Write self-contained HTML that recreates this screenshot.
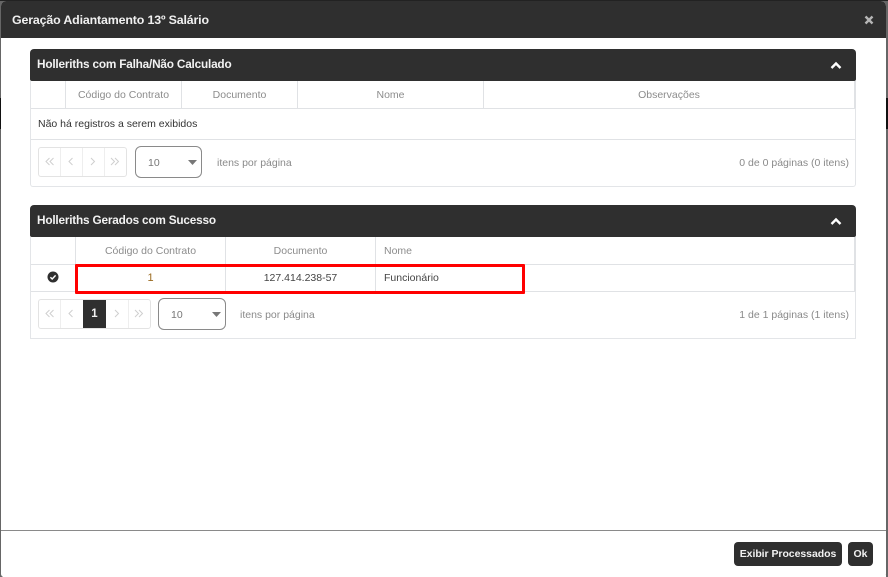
<!DOCTYPE html>
<html lang="pt">
<head>
<meta charset="utf-8">
<title>Geração Adiantamento 13º Salário</title>
<style>
html,body{margin:0;padding:0}
body{width:888px;height:577px;overflow:hidden;background:#666;position:relative;font-family:"Liberation Sans",sans-serif;font-size:10.5px;color:#8a8a8a}
div,span{position:absolute;box-sizing:border-box}
svg{position:absolute;display:block}
.t{white-space:nowrap;line-height:14px}
.c{text-align:center}
.b{font-weight:bold}
.line{background:#e0e2e5}
.hdr{background:#2f2f2f;border-radius:4px 4px 2px 2px;left:30px;width:826px;height:32px}
.hdr .t{left:7px;top:8px;color:#f2f2f2;font-size:11.8px;font-weight:bold;letter-spacing:-.2px}
.th{color:#8c8c8c}
.pg{border:1px solid #e3e3e3;border-radius:3px;height:30px;background:#fff}
.sel{border:1px solid #8a8a8a;border-radius:6px;height:32px;background:#fff}
.btn{background:#2f2f2f;border-radius:4px;color:#f2f2f2;font-weight:bold;font-size:10.5px;text-align:center;height:24px;line-height:25px;top:542px;letter-spacing:-.05px}
.ar path{fill:none;stroke:#cfcfcf;stroke-width:1}
</style>
</head>
<body>
<div style="left:0;top:98px;width:1px;height:31px;background:#111"></div>
<div style="left:886px;top:98px;width:2px;height:31px;background:#111"></div>
<div style="left:0;top:0;width:888px;height:1px;background:#222"></div>

<div style="left:1px;top:1px;width:885px;height:576px;background:#fff;border-radius:5px 5px 3px 3px"></div>
<div style="left:3px;top:575px;width:883px;height:2px;background:#fff"></div>
<div style="left:1px;top:1px;width:885px;height:37px;background:#2f2f2f;border-radius:5px 5px 0 0"></div>
<div class="t b" style="left:12px;top:13px;color:#f0f0f0;font-size:12.4px;letter-spacing:-.15px">Geração Adiantamento 13º Salário</div>
<svg style="left:864px;top:15px" width="10" height="10" viewBox="0 0 10 10"><path d="M1.5 1.5L8.5 8.5M8.5 1.5L1.5 8.5" stroke="#b5b5b5" stroke-width="2.4"/></svg>

<!-- Panel 1 -->
<div style="left:30px;top:81px;width:826px;height:106px;border:1px solid #e3e5e8;border-top:0;border-radius:0 0 3px 3px"></div>
<div class="hdr" style="top:49px"><span class="t">Holleriths com Falha/Não Calculado</span></div>
<svg style="left:830px;top:61px" width="12" height="9" viewBox="0 0 12 9"><path d="M1.5 7L6 2.5L10.5 7" fill="none" stroke="#fff" stroke-width="2.4"/></svg>
<div class="line" style="left:31px;top:108px;width:824px;height:1px"></div>
<div class="line" style="left:31px;top:139px;width:824px;height:1px"></div>
<div class="line" style="left:65px;top:81px;width:1px;height:27px"></div>
<div class="line" style="left:181px;top:81px;width:1px;height:27px"></div>
<div class="line" style="left:297px;top:81px;width:1px;height:27px"></div>
<div class="line" style="left:483px;top:81px;width:1px;height:27px"></div>
<div class="line" style="left:854px;top:81px;width:2px;height:27px"></div>
<div class="t c th" style="left:66px;top:88px;width:115px">Código do Contrato</div>
<div class="t c th" style="left:182px;top:88px;width:115px">Documento</div>
<div class="t c th" style="left:298px;top:88px;width:185px">Nome</div>
<div class="t c th" style="left:484px;top:88px;width:370px">Observações</div>
<div class="t" style="left:38px;top:117px;color:#333">Não há registros a serem exibidos</div>
<div class="pg" style="left:38px;top:147px;width:89px"></div>
<div class="line" style="left:60px;top:148px;width:1px;height:28px;background:#eee"></div>
<div class="line" style="left:82px;top:148px;width:1px;height:28px;background:#eee"></div>
<div class="line" style="left:104px;top:148px;width:1px;height:28px;background:#eee"></div>
<svg class="ar" style="left:45px;top:157px" width="10" height="9" viewBox="0 0 10 9"><path d="M4.5 1L1 4.5L4.5 8M8.5 1L5 4.5L8.5 8"/></svg>
<svg class="ar" style="left:68px;top:157px" width="6" height="9" viewBox="0 0 6 9"><path d="M4.5 1L1 4.5L4.5 8"/></svg>
<svg class="ar" style="left:90px;top:157px" width="6" height="9" viewBox="0 0 6 9"><path d="M1 1L4.5 4.5L1 8"/></svg>
<svg class="ar" style="left:110px;top:157px" width="10" height="9" viewBox="0 0 10 9"><path d="M1 1L4.5 4.5L1 8M5 1L8.5 4.5L5 8"/></svg>
<div class="sel" style="left:135px;top:146px;width:67px"></div>
<div class="t" style="left:148px;top:156px;color:#777">10</div>
<svg style="left:188px;top:160px" width="9" height="5" viewBox="0 0 9 5"><path d="M0 0H9L4.5 5Z" fill="#777"/></svg>
<div class="t" style="left:217px;top:156px">itens por página</div>
<div class="t" style="right:39px;top:156px">0 de 0 páginas (0 itens)</div>

<!-- Panel 2 -->
<div style="left:30px;top:237px;width:826px;height:102px;border:1px solid #e3e5e8;border-top:0"></div>
<div class="hdr" style="top:205px"><span class="t">Holleriths Gerados com Sucesso</span></div>
<svg style="left:830px;top:217px" width="12" height="9" viewBox="0 0 12 9"><path d="M1.5 7L6 2.5L10.5 7" fill="none" stroke="#fff" stroke-width="2.4"/></svg>
<div class="line" style="left:31px;top:264px;width:824px;height:1px"></div>
<div class="line" style="left:31px;top:291px;width:824px;height:1px"></div>
<div class="line" style="left:75px;top:237px;width:1px;height:54px"></div>
<div class="line" style="left:225px;top:237px;width:1px;height:54px"></div>
<div class="line" style="left:375px;top:237px;width:1px;height:54px"></div>
<div class="line" style="left:854px;top:237px;width:2px;height:54px"></div>
<div class="t c th" style="left:76px;top:244px;width:149px">Código do Contrato</div>
<div class="t c th" style="left:226px;top:244px;width:149px">Documento</div>
<div class="t th" style="left:384px;top:244px">Nome</div>
<svg style="left:47px;top:271px" width="12" height="12" viewBox="0 0 12 12"><circle cx="6" cy="6" r="5.5" fill="#2f2f2f"/><path d="M3.4 6.2L5.2 8L8.6 4.4" fill="none" stroke="#fff" stroke-width="1.4"/></svg>
<div class="t c" style="left:76px;top:271px;width:149px;color:#9a6a20;font-size:11px">1</div>
<div class="t c" style="left:226px;top:271px;width:149px;color:#444">127.414.238-57</div>
<div class="t" style="left:384px;top:271px;color:#444">Funcionário</div>
<div style="left:75px;top:264px;width:450px;height:30px;border:3px solid #f00;border-radius:1px"></div>
<div class="pg" style="left:38px;top:299px;width:113px"></div>
<div class="line" style="left:60px;top:300px;width:1px;height:28px;background:#eee"></div>
<div class="line" style="left:128px;top:300px;width:1px;height:28px;background:#eee"></div>
<div style="left:83px;top:300px;width:23px;height:28px;background:#2f2f2f"></div>
<div class="t c b" style="left:83px;top:307px;width:23px;color:#f2f2f2;font-size:11.5px">1</div>
<svg class="ar" style="left:45px;top:309px" width="10" height="9" viewBox="0 0 10 9"><path d="M4.5 1L1 4.5L4.5 8M8.5 1L5 4.5L8.5 8"/></svg>
<svg class="ar" style="left:68px;top:309px" width="6" height="9" viewBox="0 0 6 9"><path d="M4.5 1L1 4.5L4.5 8"/></svg>
<svg class="ar" style="left:114px;top:309px" width="6" height="9" viewBox="0 0 6 9"><path d="M1 1L4.5 4.5L1 8"/></svg>
<svg class="ar" style="left:134px;top:309px" width="10" height="9" viewBox="0 0 10 9"><path d="M1 1L4.5 4.5L1 8M5 1L8.5 4.5L5 8"/></svg>
<div class="sel" style="left:158px;top:298px;width:68px"></div>
<div class="t" style="left:171px;top:308px;color:#777">10</div>
<svg style="left:212px;top:312px" width="9" height="5" viewBox="0 0 9 5"><path d="M0 0H9L4.5 5Z" fill="#777"/></svg>
<div class="t" style="left:240px;top:308px">itens por página</div>
<div class="t" style="right:39px;top:308px">1 de 1 páginas (1 itens)</div>

<!-- Footer -->
<div style="left:1px;top:530px;width:885px;height:1px;background:#8a8a8a"></div>
<div class="btn" style="left:734px;width:108px">Exibir Processados</div>
<div class="btn" style="left:848px;width:25px">Ok</div>
</body>
</html>
